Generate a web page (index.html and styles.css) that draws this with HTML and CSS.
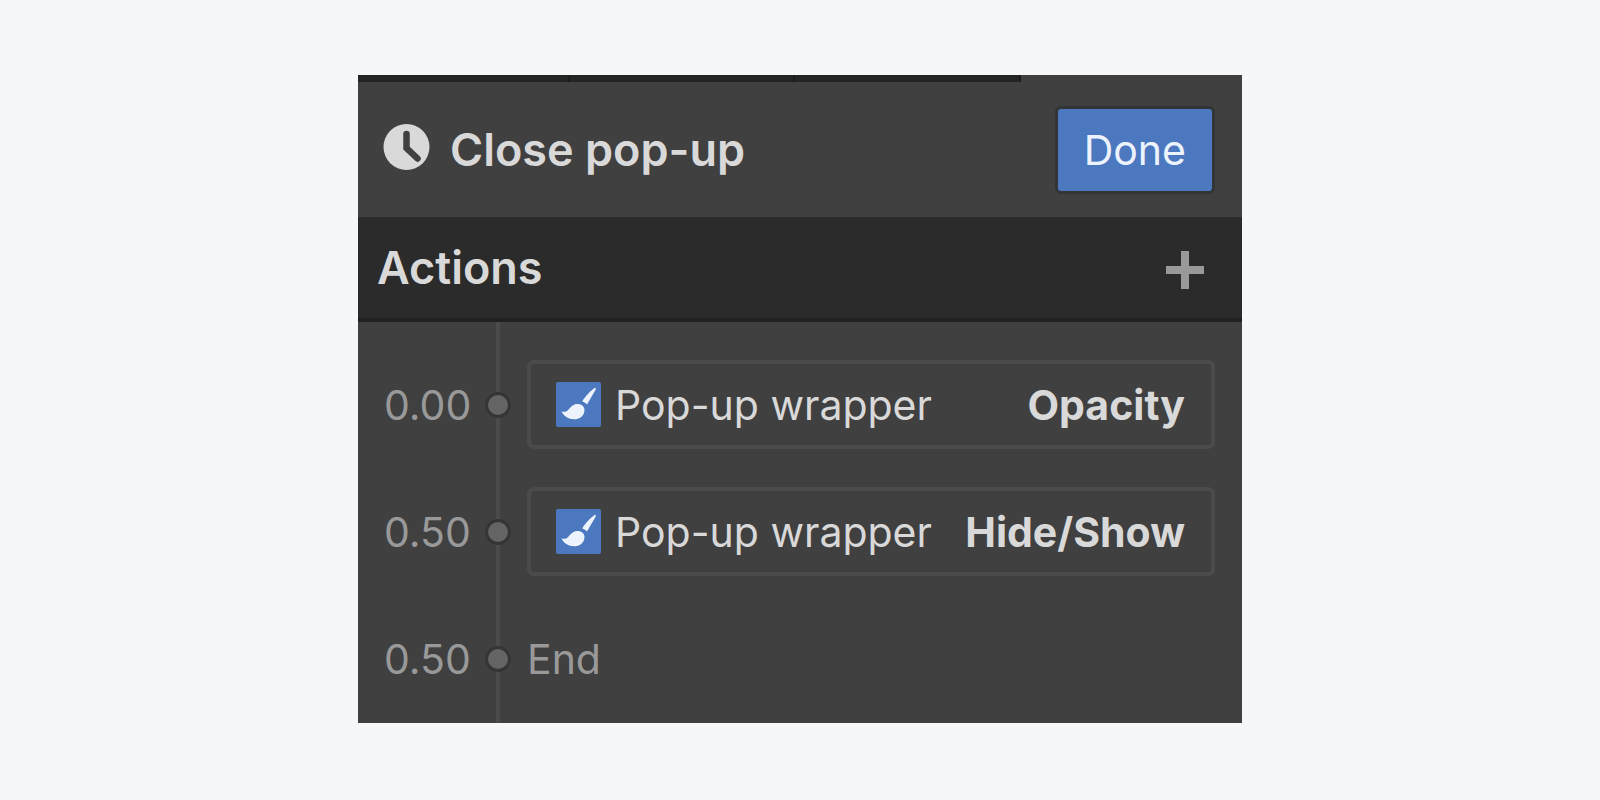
FILE: index.html
```
<!DOCTYPE html>
<html lang="en">
  <head>
    <meta charset="utf-8" />
    <title>Close pop-up</title>
    <link rel="stylesheet" href="styles.css" />
  </head>
  <body>
    <!-- brush icon is shared by the action cards -->
    <svg width="0" height="0" class="sprite">
      <symbol id="brush" viewBox="0 0 45 45">
        <path d="M39 5.800c.8.300 1 1.200.6 2L31 22.600c-1.200-1.600-2.700-2.800-4.800-3.200C29 15 34.500 8.500 39 5.800z" />
        <path d="M5.500 29.600c3.500.6 5.500 0 7.500-2.600 2.200-3 5-5 8.500-5 4 0 7 2.600 7 6 0 6-5 9.300-10.500 9.300-5.500 0-10.500-3.200-12.500-7.700z" />
      </symbol>
    </svg>

    <main class="panel">
      <div class="tabs"><span></span><span></span><span></span></div>

      <header class="panel-header">
        <svg class="clock" width="47" height="52" viewBox="0 0 47 52">
          <circle cx="23.500" cy="23" r="23" fill="#d9d9d9" />
          <path d="M23.500 10v14l11 10.500" fill="none" stroke="#404040" stroke-width="6.500" stroke-linecap="round" />
        </svg>
        <h1 class="title">Close pop-up</h1>
        <button class="done-btn">Done</button>
      </header>

      <div class="actions-bar">
        <h2 class="title">Actions</h2>
        <button class="add-btn" aria-label="Add action">
          <svg width="38" height="38" viewBox="0 0 38 38">
            <path d="M15 0h8v15h15v8H23v15h-8V23H0v-8h15z" fill="#999" />
          </svg>
        </button>
      </div>

      <ol class="timeline">
        <li class="row">
          <span class="time">0.00</span>
          <span class="dot"></span>
          <div class="card">
            <svg class="brush"><use href="#brush" /></svg>
            <span class="target">Pop-up wrapper</span>
            <strong>Opacity</strong>
          </div>
        </li>
        <li class="row">
          <span class="time">0.50</span>
          <span class="dot"></span>
          <div class="card">
            <svg class="brush"><use href="#brush" /></svg>
            <span class="target">Pop-up wrapper</span>
            <strong>Hide/Show</strong>
          </div>
        </li>
        <li class="row">
          <span class="time">0.50</span>
          <span class="dot"></span>
          <span class="end">End</span>
        </li>
      </ol>
    </main>
  </body>
</html>
```
FILE: styles.css
```
* {
  box-sizing: border-box;
}
body {
  margin: 0;
  padding: 75px 20px;
  background-color: #f5f7f9;
  font-family: Inter, "Liberation Sans", sans-serif;
  font-size: 41px;
  line-height: 50px;
  color: #d9d9d9;
}
.sprite {
  display: block;
}

.panel {
  max-width: 884px;
  margin: 0 auto;
  background-color: #404040;
}

/* bottom edge of the tabs above the panel */
.tabs {
  display: grid;
  grid-template-columns: 212fr 225fr 226fr;
  width: 75%;
  height: 7px;
}
.tabs span {
  background-color: #232424;
  border-right: 2px solid #1c1c1c;
}

/* header */
.panel-header {
  display: flex;
  align-items: center;
  height: 135px;
  padding: 0 27px 0 25px;
}
.title {
  margin: 0;
  font-size: 45px;
  font-weight: 600;
}
.clock {
  margin-right: 20px;
}
.done-btn {
  margin-left: auto;
  padding: 16px 26px;
  border: 3px solid #333436;
  border-radius: 6px;
  background-color: #4b78bf;
  color: #edf3fc;
  font: inherit;
  cursor: pointer;
}

/* actions bar */
.actions-bar {
  display: flex;
  align-items: center;
  justify-content: space-between;
  height: 105px;
  padding: 0 38px 0 19px;
  background-color: #2b2b2b;
  border-bottom: 4px solid #212121;
}
.add-btn {
  display: flex;
  padding: 4px 0 0;
  border: none;
  background: none;
  cursor: pointer;
}

/* timeline */
.timeline {
  display: flex;
  flex-direction: column;
  gap: 38px;
  margin: 0;
  padding: 38px 27px 20px 26px;
  list-style: none;
  background: linear-gradient(#4b4b4b, #4b4b4b) 138px 0 / 4px 100% no-repeat;
}
.row {
  display: grid;
  grid-template-columns: 101px 26px 1fr;
  align-items: center;
  height: 89px;
}
.time,
.end {
  color: #999;
}
.dot {
  width: 26px;
  height: 26px;
  border: 3px solid #353535;
  border-radius: 50%;
  background-color: #646464;
}
.end {
  margin-left: 16px;
}
.card {
  display: flex;
  align-items: center;
  height: 89px;
  margin-left: 16px;
  padding: 0 26px 0 25px;
  border: 4px solid #4b4b4b;
  border-radius: 7px;
}
.card strong {
  margin-left: auto;
  font-weight: 700;
}
.brush {
  width: 45px;
  height: 45px;
  margin-right: 14px;
  border-radius: 2px;
  background-color: #4b78bf;
  fill: #edf3fc;
}
```
